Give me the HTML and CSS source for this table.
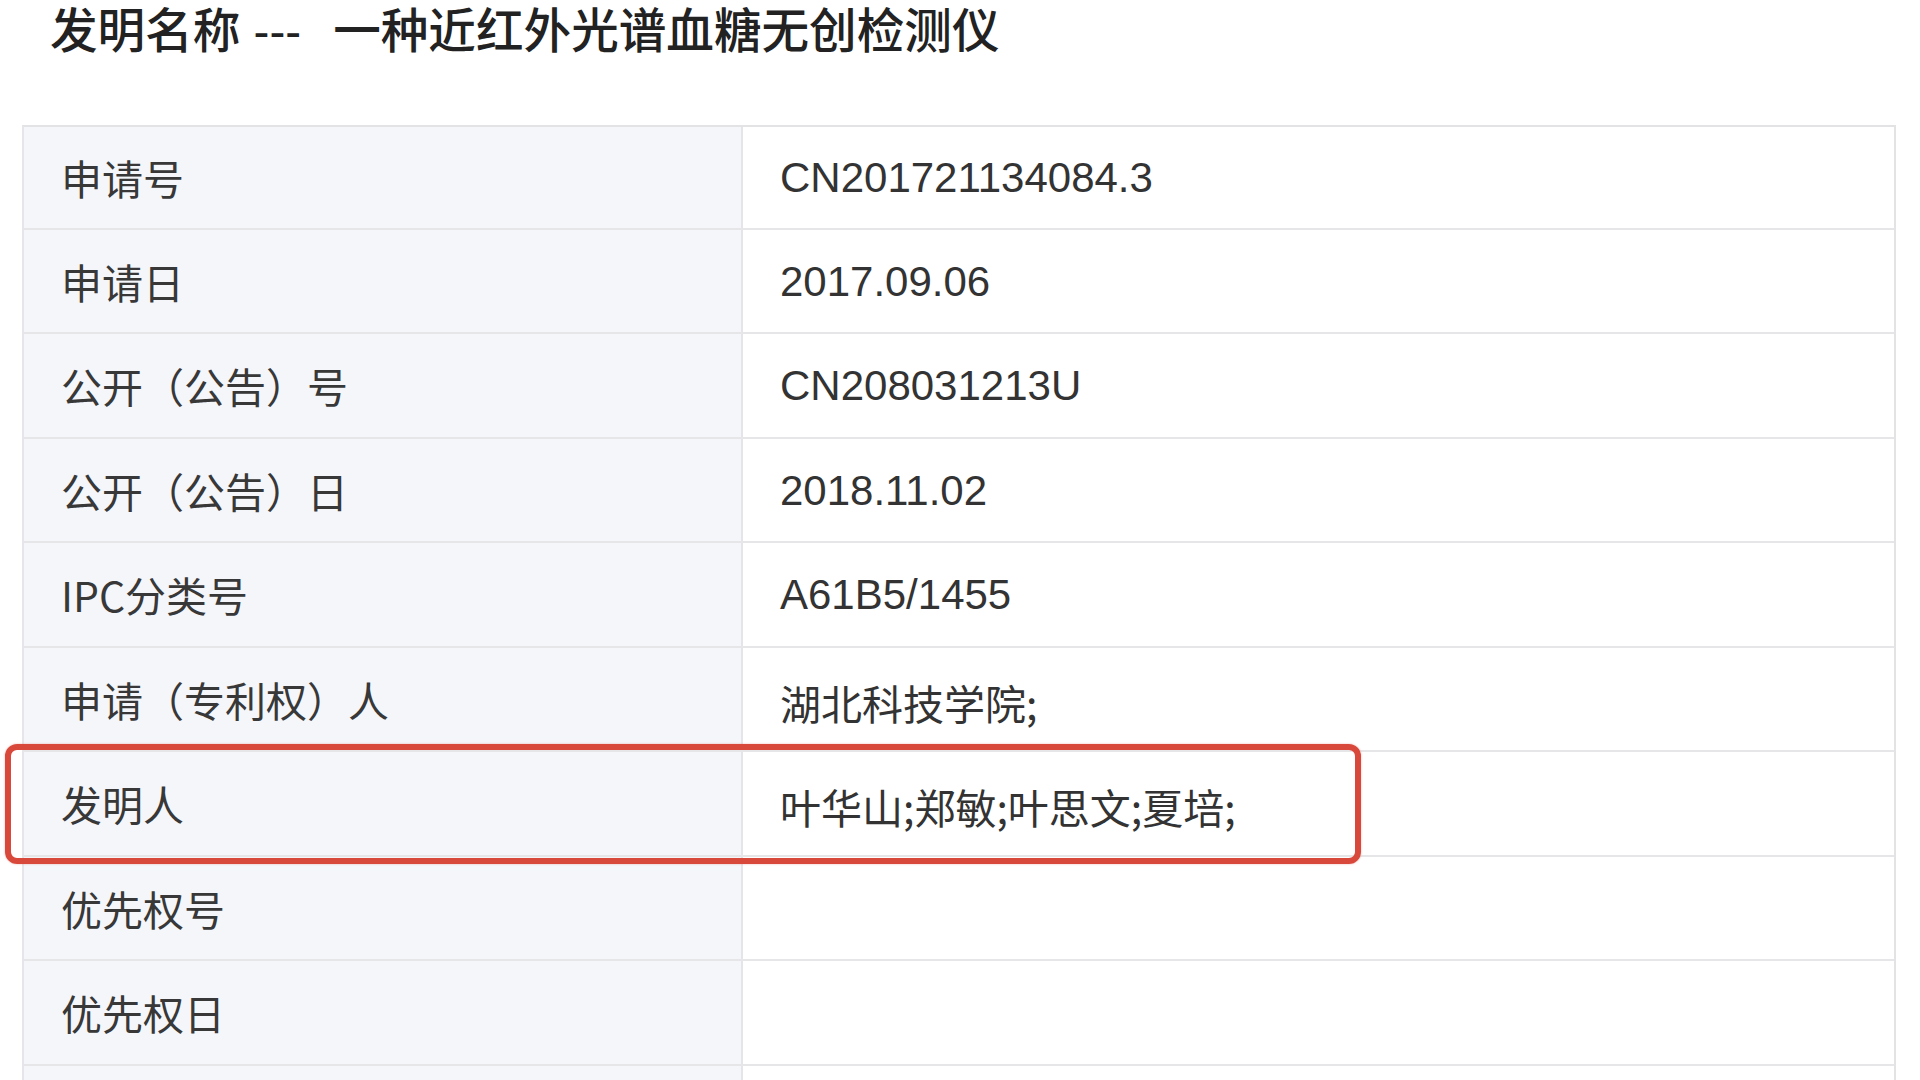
FILE: index.html
```html
<!DOCTYPE html>
<html lang="zh-CN">
<head>
<meta charset="utf-8">
<title>发明名称</title>
<link rel="stylesheet" href="styles.css">
</head>
<body>
<h1 class="title">发明名称 <span class="sep">---</span>一种近红外光谱血糖无创检测仪</h1>
<div class="sheet">
  <div class="row"><div class="label">申请号</div><div class="value num">CN201721134084.3</div></div>
  <div class="row"><div class="label">申请日</div><div class="value num">2017.09.06</div></div>
  <div class="row"><div class="label">公开（公告）号</div><div class="value num">CN208031213U</div></div>
  <div class="row"><div class="label">公开（公告）日</div><div class="value num">2018.11.02</div></div>
  <div class="row"><div class="label">IPC分类号</div><div class="value num">A61B5/1455</div></div>
  <div class="row"><div class="label">申请（专利权）人</div><div class="value cjk">湖北科技学院;</div></div>
  <div class="row row-marked"><div class="label">发明人</div><div class="value cjk">叶华山;郑敏;叶思文;夏培;</div></div>
  <div class="row"><div class="label">优先权号</div><div class="value"></div></div>
  <div class="row"><div class="label">优先权日</div><div class="value"></div></div>
  <div class="row"><div class="label"></div><div class="value"></div></div>
</div>
</body>
</html>
```

FILE: styles.css
```css
html, body {
  margin: 0;
  padding: 0;
  background: #ffffff;
  overflow: hidden;
  height: 1080px;
}

.title {
  margin: 0;
  padding: 6px 0 0 50px;
  height: 57px;
  box-sizing: border-box;
  font-family: "Liberation Sans", "Noto Sans CJK SC", sans-serif;
  font-weight: 500;
  font-size: 47.6px;
  line-height: 51px;
  color: #222222;
  white-space: nowrap;
}

.sep {
  margin-right: 32px;
}

.sheet {
  margin: 68px 0 0 22px;
  width: 1874px;
  box-sizing: border-box;
  border-top: 2px solid #e3e3e6;
  border-left: 2px solid #e6e6ea;
  border-right: 2px solid #e3e3e6;
}

.row {
  position: relative;
  display: grid;
  grid-template-columns: 719px 1fr;
  height: 104.5px;
  box-sizing: border-box;
  border-bottom: 2px solid #e6e6e9;
}

.sheet .row:first-child {
  height: 102.5px;
}

.label {
  display: flex;
  align-items: center;
  padding-left: 37px;
  background: #f5f6fa;
  border-right: 2px solid #e4e5eb;
  font-family: "Noto Sans CJK SC", "Liberation Sans", sans-serif;
  font-size: 41px;
  color: #383838;
  white-space: nowrap;
}

.value {
  display: flex;
  align-items: center;
  padding-left: 37px;
  background: #ffffff;
  font-size: 41px;
  color: #333333;
  white-space: nowrap;
}

.num {
  font-family: "Liberation Sans", "Noto Sans CJK SC", sans-serif;
  font-size: 42px;
  padding-top: 2px;
}

.cjk {
  font-family: "Noto Sans CJK SC", "Liberation Sans", sans-serif;
  padding-top: 6px;
}

.row-marked::after {
  content: "";
  position: absolute;
  z-index: 2;
  top: -8px;
  left: -19px;
  width: 1356px;
  height: 120px;
  box-sizing: border-box;
  border: 6px solid #d8483b;
  border-radius: 12px;
  box-shadow: 0 0 2px rgba(216, 72, 59, 0.45);
  pointer-events: none;
}
```
